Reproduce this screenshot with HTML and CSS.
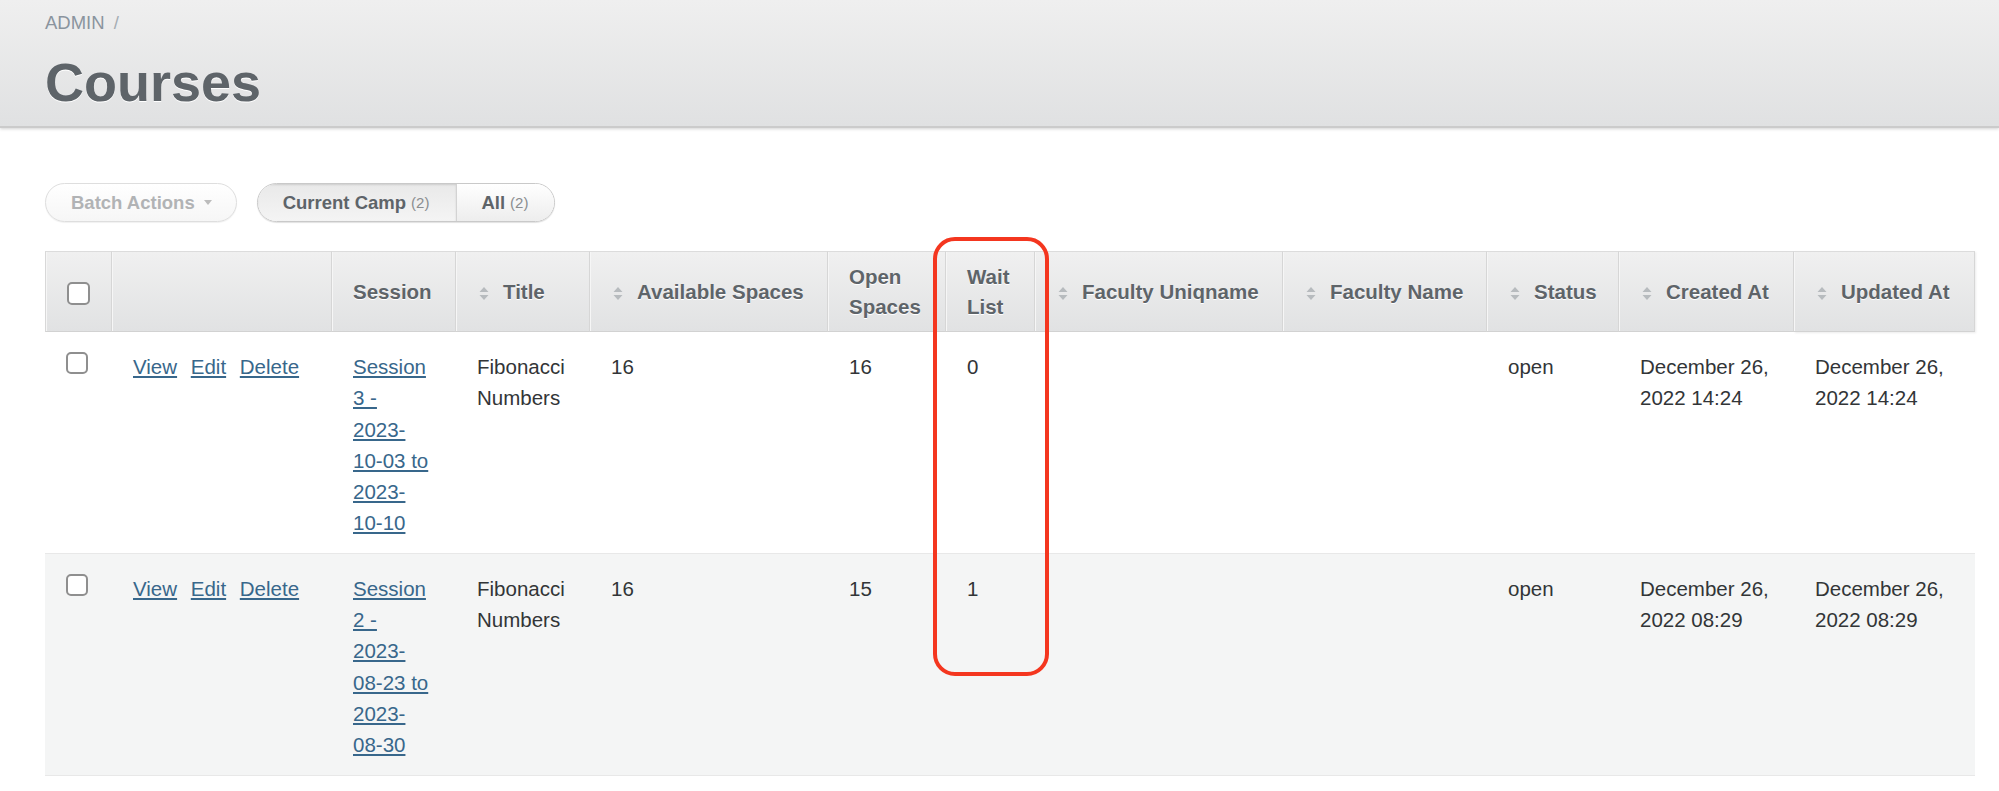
FILE: index.html
```html
<!DOCTYPE html>
<html lang="en">
<head>
<meta charset="utf-8">
<title>Courses | Admin</title>
<link rel="stylesheet" href="styles.css">
</head>
<body>
<div class="title-bar">
  <div class="breadcrumb">ADMIN <span class="sep">/</span></div>
  <h2 class="page-title">Courses</h2>
</div>
<div class="main">
  <div class="tools">
    <span class="btn batch">Batch Actions <span class="caret"></span></span>
    <div class="scopes">
      <span class="scope selected">Current Camp <span class="count">(2)</span></span>
      <span class="scope">All <span class="count">(2)</span></span>
    </div>
  </div>
  <div class="table-wrap">
    <table class="index-table">
      <colgroup>
        <col class="w-cb"><col class="w-actions"><col class="w-session"><col class="w-title"><col class="w-avail"><col class="w-open"><col class="w-wait"><col class="w-uniq"><col class="w-fname"><col class="w-status"><col class="w-created"><col class="w-updated">
      </colgroup>
      <thead>
        <tr>
          <th class="first"><span class="cb"></span></th>
          <th></th>
          <th>Session</th>
          <th><span class="sort"><svg viewBox="0 0 10 13" width="10" height="13"><path d="M5 0L9.5 5H0.5Z M0.5 8H9.5L5 13Z" fill="#b7bbbe"/></svg></span>Title</th>
          <th><span class="sort"><svg viewBox="0 0 10 13" width="10" height="13"><path d="M5 0L9.5 5H0.5Z M0.5 8H9.5L5 13Z" fill="#b7bbbe"/></svg></span>Available Spaces</th>
          <th>Open Spaces</th>
          <th>Wait List</th>
          <th><span class="sort"><svg viewBox="0 0 10 13" width="10" height="13"><path d="M5 0L9.5 5H0.5Z M0.5 8H9.5L5 13Z" fill="#b7bbbe"/></svg></span>Faculty Uniqname</th>
          <th><span class="sort"><svg viewBox="0 0 10 13" width="10" height="13"><path d="M5 0L9.5 5H0.5Z M0.5 8H9.5L5 13Z" fill="#b7bbbe"/></svg></span>Faculty Name</th>
          <th><span class="sort"><svg viewBox="0 0 10 13" width="10" height="13"><path d="M5 0L9.5 5H0.5Z M0.5 8H9.5L5 13Z" fill="#b7bbbe"/></svg></span>Status</th>
          <th><span class="sort"><svg viewBox="0 0 10 13" width="10" height="13"><path d="M5 0L9.5 5H0.5Z M0.5 8H9.5L5 13Z" fill="#b7bbbe"/></svg></span>Created At</th>
          <th class="last"><span class="sort"><svg viewBox="0 0 10 13" width="10" height="13"><path d="M5 0L9.5 5H0.5Z M0.5 8H9.5L5 13Z" fill="#b7bbbe"/></svg></span>Updated At</th>
        </tr>
      </thead>
      <tbody>
        <tr class="odd">
          <td><span class="cb cb-row"></span></td>
          <td class="actions"><a href="#" class="member-link">View</a> <a href="#" class="member-link">Edit</a> <a href="#" class="member-link">Delete</a></td>
          <td class="session"><a href="#">Session 3 - 2023-<wbr>10-03 to 2023-<wbr>10-10</a></td>
          <td>Fibonacci Numbers</td>
          <td>16</td>
          <td>16</td>
          <td>0</td>
          <td></td>
          <td></td>
          <td>open</td>
          <td>December 26, 2022 14:24</td>
          <td>December 26, 2022 14:24</td>
        </tr>
        <tr class="even">
          <td><span class="cb cb-row"></span></td>
          <td class="actions"><a href="#" class="member-link">View</a> <a href="#" class="member-link">Edit</a> <a href="#" class="member-link">Delete</a></td>
          <td class="session"><a href="#">Session 2 - 2023-<wbr>08-23 to 2023-<wbr>08-30</a></td>
          <td>Fibonacci Numbers</td>
          <td>16</td>
          <td>15</td>
          <td>1</td>
          <td></td>
          <td></td>
          <td>open</td>
          <td>December 26, 2022 08:29</td>
          <td>December 26, 2022 08:29</td>
        </tr>
      </tbody>
    </table>
    <div class="annotation"></div>
  </div>
</div>
</body>
</html>
```

FILE: styles.css
```css
* { box-sizing: border-box; }

html, body {
  margin: 0;
  padding: 0;
  background: #ffffff;
}

body {
  font-family: "Liberation Sans", Arial, Helvetica, sans-serif;
  color: #323537;
  font-size: 20px;
}

/* ---------- title bar ---------- */
.title-bar {
  padding: 12px 45px 12px;
  background: linear-gradient(180deg, #efefef 0%, #e0e1e2 100%);
  border-bottom: 2px solid #cbcbcb;
  box-shadow: 0 1px 3px rgba(0, 0, 0, 0.18);
  position: relative;
}

.breadcrumb {
  font-size: 18.5px;
  line-height: 22px;
  color: #8a949e;
}

.breadcrumb .sep {
  margin-left: 4px;
  color: #a5acb3;
}

.page-title {
  margin: 16px 0 0;
  font-size: 54px;
  line-height: 64px;
  font-weight: bold;
  color: #5e6469;
  text-shadow: 0 1px 0 #ffffff;
}

/* ---------- main ---------- */
.main {
  padding: 0 24px 40px 45px;
}

.tools {
  display: flex;
  align-items: center;
  gap: 20px;
  margin-top: 55px;
}

.btn {
  display: inline-flex;
  align-items: center;
  height: 39px;
  border-radius: 20px;
  font-size: 18.5px;
  font-weight: bold;
}

.batch {
  padding: 0 24px 0 25px;
  color: #b1b3b5;
  border: 1px solid #dedede;
  background: linear-gradient(180deg, #ffffff 0%, #f6f6f6 100%);
  box-shadow: 0 1px 1px rgba(0, 0, 0, 0.06);
}

.caret {
  display: inline-block;
  width: 0;
  height: 0;
  margin-left: 9px;
  border-left: 4px solid transparent;
  border-right: 4px solid transparent;
  border-top: 5px solid #bcbcbc;
}

.scopes {
  display: flex;
  height: 39px;
  border: 1px solid #c9c9c9;
  border-radius: 20px;
  overflow: hidden;
  box-shadow: 0 1px 1px rgba(0, 0, 0, 0.12);
}

.scope {
  display: flex;
  align-items: center;
  font-size: 18.5px;
  font-weight: bold;
  color: #5e6469;
  background: linear-gradient(180deg, #ffffff 0%, #ededed 100%);
  padding: 0 26px 0 24px;
  border-left: 1px solid #d3d3d3;
}

.scope.selected {
  padding: 0 27px 0 25px;
  border-left: 0;
  background: linear-gradient(180deg, #e9e9e9 0%, #f4f4f4 100%);
  box-shadow: inset 0 1px 2px rgba(0, 0, 0, 0.12);
}

.count {
  font-size: 15px;
  font-weight: normal;
  color: #8a8d90;
  margin-left: 5px;
}

/* ---------- table ---------- */
.table-wrap {
  position: relative;
  margin-top: 29px;
}

.index-table {
  width: 100%;
  table-layout: fixed;
  border-collapse: separate;
  border-spacing: 0;
  font-size: 20.5px;
}

.w-cb { width: 67px; }
.w-actions { width: 220px; }
.w-session { width: 124px; }
.w-title { width: 134px; }
.w-avail { width: 238px; }
.w-open { width: 118px; }
.w-wait { width: 89px; }
.w-uniq { width: 248px; }
.w-fname { width: 204px; }
.w-status { width: 132px; }
.w-created { width: 175px; }
.w-updated { width: 181px; }

.index-table th {
  padding: 10px 10px 9px 21px;
  line-height: 30px;
  font-weight: bold;
  text-align: left;
  vertical-align: middle;
  color: #5e6469;
  text-shadow: 0 1px 0 #ffffff;
  background: linear-gradient(180deg, #f0f0f0 0%, #e1e2e3 100%);
  border-top: 1px solid #dcdcdc;
  border-bottom: 1px solid #d2d2d2;
  border-right: 1px solid #d6d6d6;
  box-shadow: inset 1px 0 0 #f6f6f6;
}

.index-table th.first {
  border-left: 1px solid #d8d8d8;
}

.index-table th.last {
  box-shadow: inset 1px 0 0 #f6f6f6, 1px 1px 2px rgba(0, 0, 0, 0.08);
}

.sort {
  display: inline-block;
  width: 10px;
  height: 13px;
  margin: 0 14px 0 2px;
  vertical-align: -1px;
}

.sort svg { display: block; }

.cb {
  display: inline-block;
  width: 23px;
  height: 23px;
  border: 2px solid #8f8f8f;
  border-radius: 5px;
  background: #ffffff;
  vertical-align: middle;
}

.cb-row {
  display: block;
  width: 22px;
  height: 22px;
  margin-top: 1px;
}

.index-table td {
  padding: 19px 12px 14px 21px;
  line-height: 31.3px;
  vertical-align: top;
  border-bottom: 1px solid #e8e8e8;
  color: #323537;
}

.index-table td.session {
  padding-right: 26px;
}

.index-table td.actions {
  white-space: nowrap;
}

.index-table tr.even td {
  background: #f4f5f5;
}

.index-table a {
  color: #38678b;
  text-decoration: underline;
}

.member-link {
  margin-right: 8px;
}

/* ---------- annotation overlay ---------- */
.annotation {
  position: absolute;
  left: 888px;
  top: -14px;
  width: 116px;
  height: 439px;
  border: 4px solid #f4361f;
  border-radius: 22px;
  pointer-events: none;
}
```
